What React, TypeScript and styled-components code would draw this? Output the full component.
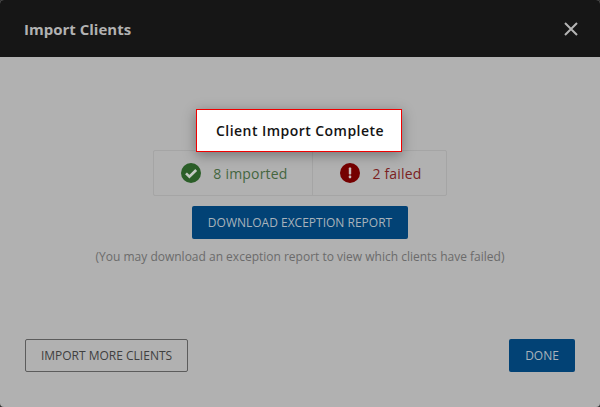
import React from "react";
import styled, { createGlobalStyle } from "styled-components";

const Global = createGlobalStyle`
  html, body { margin: 0; padding: 0; background: #333; }
  body { font-family: "Open Sans", "Liberation Sans", sans-serif; }
`;

const Dialog = styled.div`
  position: relative;
  width: 600px;
  height: 407px;
  display: flex;
  flex-direction: column;
  background: #b1b1b1;
  border-radius: 4px;
  overflow: hidden;
`;

const Header = styled.header`
  height: 57px;
  flex: none;
  box-sizing: border-box;
  padding: 0 20px 0 24px;
  background: #161616;
  display: flex;
  align-items: center;
  justify-content: space-between;
`;

const Title = styled.h1`
  margin: 0;
  font-size: 15px;
  font-weight: 700;
  color: #b2b2b2;
`;

const Close = styled.button`
  border: 0;
  padding: 0;
  background: none;
  width: 18px;
  height: 18px;
  display: block;
  svg { display: block; }
`;

const Body = styled.main`
  flex: 1;
  display: flex;
  flex-direction: column;
  align-items: center;
  padding-top: 93px;
`;

const Stats = styled.div`
  display: flex;
  width: 294px;
  height: 46px;
  box-sizing: border-box;
  border: 1px solid #a5a5a5;
  border-radius: 2px;
`;

const Stat = styled.div<{ $w: number; $color: string }>`
  width: ${(p) => p.$w}px;
  display: flex;
  align-items: center;
  justify-content: center;
  gap: 12px;
  padding-left: 3px;
  box-sizing: border-box;
  font-size: 14px;
  letter-spacing: 0.2px;
  color: ${(p) => p.$color};
  & + & { border-left: 1px solid #a5a5a5; }
`;

const Primary = styled.button`
  border: 0;
  border-radius: 2px;
  background: #024275;
  color: #a9b3bb;
  font-family: inherit;
  font-size: 12px;
  padding: 0;
  height: 33px;
`;

const DownloadButton = styled(Primary)`
  width: 216px;
  margin-top: 10px;
`;

const Note = styled.p`
  margin: 10px 0 0;
  font-size: 12px;
  line-height: 16px;
  color: #6b6b6b;
`;

const Footer = styled.footer`
  display: flex;
  justify-content: space-between;
  align-items: center;
  padding: 0 25px 35px;
`;

const Outline = styled.button`
  width: 163px;
  height: 33px;
  box-sizing: border-box;
  padding: 0;
  background: transparent;
  border: 1px solid #5c5c5c;
  border-radius: 2px;
  color: #3f3f3f;
  font-family: inherit;
  font-size: 12px;
`;

const DoneButton = styled(Primary)`
  width: 66px;
`;

const Toast = styled.div`
  position: absolute;
  left: 196px;
  top: 109px;
  width: 206px;
  height: 43px;
  box-sizing: border-box;
  background: #fff;
  border: 1px solid #f00000;
  box-shadow: 0 3px 12px rgba(0, 0, 0, 0.35);
  display: flex;
  align-items: center;
  justify-content: center;
  padding-left: 2px;
  font-size: 14px;
  font-weight: 600;
  letter-spacing: 0.45px;
  color: #141414;
`;

const Check = () => (
  <svg width="20" height="20" viewBox="0 0 20 20">
    <circle cx="10" cy="10" r="10" fill="#2b5e28" />
    <path d="M5 10.3l3.4 3.4L15.2 7" fill="none" stroke="#c4c9c3" strokeWidth="2.6" />
  </svg>
);

const Alert = () => (
  <svg width="20" height="20" viewBox="0 0 20 20">
    <circle cx="10" cy="10" r="10" fill="#750000" />
    <rect x="8.8" y="4.6" width="2.4" height="6.8" rx="0.6" fill="#c9bcbc" />
    <rect x="8.8" y="12.6" width="2.4" height="2.6" rx="0.6" fill="#c9bcbc" />
  </svg>
);

export default function App() {
  return (
    <>
      <Global />
      <Dialog>
        <Header>
          <Title>Import Clients</Title>
          <Close aria-label="Close">
            <svg width="18" height="18" viewBox="0 0 18 18">
              <path d="M3 3l12 12M15 3L3 15" stroke="#b4b4b4" strokeWidth="2" fill="none" />
            </svg>
          </Close>
        </Header>
        <Body>
          <Stats>
            <Stat $w={158} $color="#44663f">
              <Check />
              <span>8 imported</span>
            </Stat>
            <Stat $w={134} $color="#7b2222">
              <Alert />
              <span>2 failed</span>
            </Stat>
          </Stats>
          <DownloadButton>DOWNLOAD EXCEPTION REPORT</DownloadButton>
          <Note>(You may download an exception report to view which clients have failed)</Note>
        </Body>
        <Footer>
          <Outline>IMPORT MORE CLIENTS</Outline>
          <DoneButton>DONE</DoneButton>
        </Footer>
        <Toast>Client Import Complete</Toast>
      </Dialog>
    </>
  );
}
